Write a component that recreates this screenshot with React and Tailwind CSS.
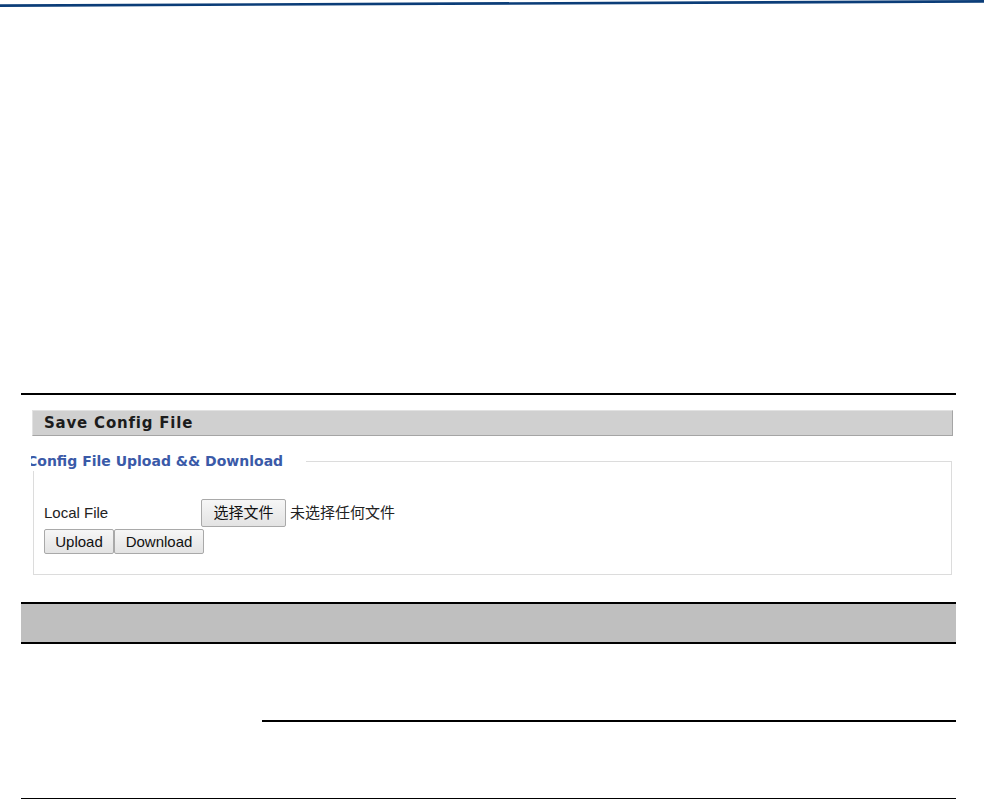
const sans = { fontFamily: '"Liberation Sans", "Noto Sans CJK SC", sans-serif' };

const Button = ({ children, className = '' }) => (
  <button
    type="button"
    className={`h-[25px] border border-[#a9a9a9] rounded-[2px] bg-gradient-to-b from-[#f6f6f6] to-[#e3e3e3] px-[9px] text-[15px] leading-none text-[#111] ${className}`}
  >
    {children}
  </button>
);

export default function App() {
  return (
    <div className="w-[984px] min-h-[799px] bg-white text-[#222]" style={sans}>
      <svg width="984" height="8" viewBox="0 0 984 8" className="block">
        <line x1="0" y1="5.6" x2="984" y2="1.4" stroke="#0b3d78" strokeWidth="2.6" />
      </svg>

      <div className="mt-[385px] ml-[21px] mr-[28px] h-[2px] bg-black" />

      <div className="mt-[15px] ml-[32px] mr-[31px] h-[26px] flex items-center bg-[#d0d0d0] border border-t-[#e2e2e2] border-l-[#e2e2e2] border-r-[#a5a5a5] border-b-[#a5a5a5] pl-[11px]">
        <span className="font-bold text-[15px] text-[#1c1c1c] tracking-[0.8px]" style={{ fontFamily: '"DejaVu Sans", sans-serif' }}>
          Save Config File
        </span>
      </div>

      <fieldset className="mt-[15px] ml-[33px] w-[919px] border border-[#dcdcdc] pb-[20px]">
        <legend className="-ml-[3px] pr-[23px] overflow-hidden h-[20px] leading-[20px]">
          <span
            className="block -ml-[4px] font-bold text-[14px] text-[#3a5aa8] whitespace-nowrap"
            style={{ fontFamily: '"DejaVu Sans", sans-serif' }}
          >
            Config File Upload &amp;&amp; Download
          </span>
        </legend>
        <div className="pt-[28px] pl-[10px]">
          <div className="flex items-center h-[28px]">
            <span className="w-[157px] text-[15px] text-[#222]">Local File</span>
            <button
              type="button"
              className="h-[28px] w-[85px] border border-[#a9a9a9] rounded-[2px] bg-gradient-to-b from-[#f6f6f6] to-[#e3e3e3] text-[15px] text-[#111]"
            >
              选择文件
            </button>
            <span className="ml-[4px] text-[15px] text-[#222]">未选择任何文件</span>
          </div>
          <div className="flex mt-[2px]">
            <Button className="w-[70px]">Upload</Button>
            <Button className="w-[90px]">Download</Button>
          </div>
        </div>
      </fieldset>

      <div className="mt-[27px] ml-[21px] mr-[28px] h-[42px] bg-[#bfbfbf] border-y-2 border-black" />

      <div className="ml-[21px] mr-[28px] flex border-b-2 border-black">
        <div className="w-[241px]" />
        <div className="flex-1">
          <div className="h-[78px] border-b-2 border-black" />
          <div className="h-[76px]" />
        </div>
      </div>
    </div>
  );
}
